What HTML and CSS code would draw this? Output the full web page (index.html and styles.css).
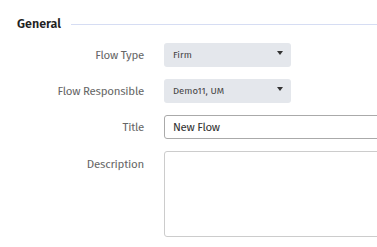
FILE: index.html
```html
<!DOCTYPE html>
<html lang="en">
  <head>
    <meta charset="UTF-8" />
    <meta name="viewport" content="width=device-width, initial-scale=1.0" />
    <title>Flow - General</title>
    <link rel="stylesheet" href="styles.css">
  </head>
  <body>
    <div class="section">
      <div class="section-head">
        <span class="section-title">General</span>
        <span class="section-line"></span>
      </div>

      <div class="form">
        <label class="label">Flow Type</label>
        <div class="select">
          <span>Firm</span>
          <svg class="caret" width="6" height="4" viewBox="0 0 6 4"><path d="M0 0h6L3 4z" fill="#333"/></svg>
        </div>

        <label class="label">Flow Responsible</label>
        <div class="select">
          <span>Demo11, UM</span>
          <svg class="caret" width="6" height="4" viewBox="0 0 6 4"><path d="M0 0h6L3 4z" fill="#333"/></svg>
        </div>

        <label class="label">Title</label>
        <input class="input" type="text" value="New Flow" />

        <label class="label label-top">Description</label>
        <textarea class="textarea"></textarea>
      </div>
    </div>
  </body>
</html>
```

FILE: styles.css
```css
body {
  margin: 0;
  font-family: "Fira Sans", Lato, "Open Sans", sans-serif;
  color: #555;
  background: #fff;
  overflow: hidden;
}

.section {
  padding: 13px 0 0 17px;
}

.section-head {
  display: flex;
  align-items: center;
  height: 20px;
}

.section-title {
  font-size: 12.5px;
  font-weight: 600;
  color: #222;
}

.section-line {
  flex: 1;
  height: 1px;
  margin: 3px 0 0 10px;
  background: #d6ddf3;
}

.form {
  display: grid;
  grid-template-columns: 127px 230px;
  column-gap: 20px;
  row-gap: 12px;
  margin-top: 10px;
  align-items: center;
}

.label {
  text-align: right;
  font-size: 11.5px;
  letter-spacing: -0.25px;
  color: #666;
}

.label-top {
  align-self: start;
  padding-top: 6px;
}

.select {
  display: flex;
  justify-content: space-between;
  align-items: center;
  width: 127px;
  height: 24px;
  box-sizing: border-box;
  padding: 0 8px 0 9px;
  background: #e4e7ec;
  border-radius: 3px;
  font-size: 9.5px;
  color: #444;
}

.caret {
  margin-top: -4px;
}

.input {
  box-sizing: border-box;
  height: 24px;
  width: 230px;
  padding: 0 8px;
  border: 1px solid #aaa;
  border-radius: 3px;
  font-family: inherit;
  font-size: 11.5px;
  letter-spacing: -0.3px;
  color: #333;
}

.textarea {
  box-sizing: border-box;
  height: 86px;
  width: 230px;
  border: 1px solid #ccc;
  border-radius: 3px;
  resize: none;
  display: block;
}
```
